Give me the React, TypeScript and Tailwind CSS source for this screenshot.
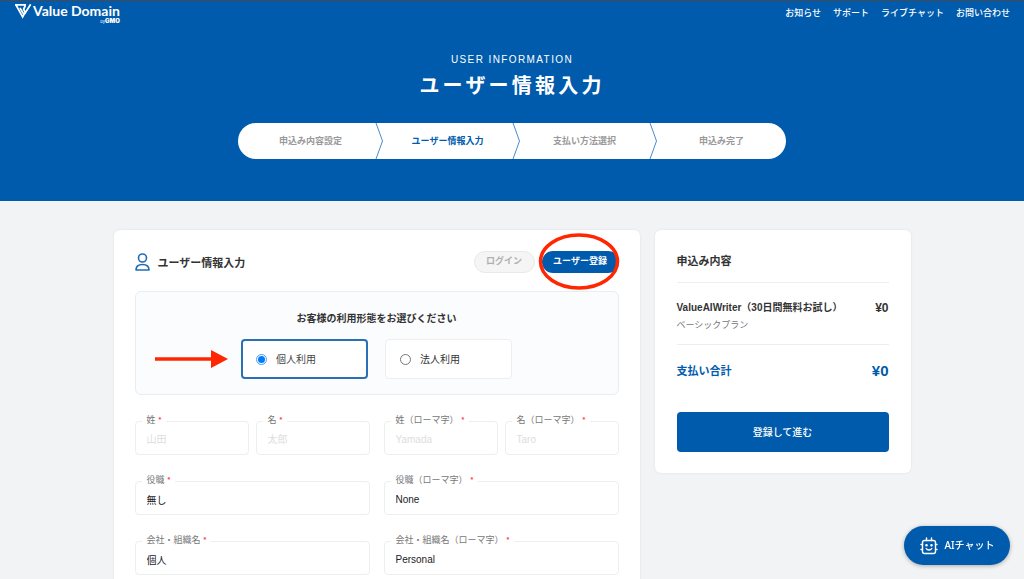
import { useId, useState } from 'react';

const NAV = ['お知らせ', 'サポート', 'ライブチャット', 'お問い合わせ'];
const STEPS = ['申込み内容設定', 'ユーザー情報入力', '支払い方法選択', '申込み完了'];
const CURRENT_STEP = 1;

function Logo() {
  return (
    <a href="#" className="flex items-start text-white" aria-label="Value Domain by GMO">
      <svg viewBox="0 0 51 45" className="mt-[3px] mr-px ml-px h-[15px] w-[17px]" fill="none" stroke="currentColor" strokeWidth="5">
        <path d="M0 2.500h33M3 3l20 36 7-13M15 12l12 20" />
        <path d="M31 4l-5 12 5 10L47 1" strokeWidth="5.500" />
      </svg>
      <span className="flex flex-col items-end">
        <span className="mt-[2px] font-[Lato,sans-serif] text-[14px] leading-[16px] font-bold">Value Domain</span>
        <span className="-mt-px font-[Inter,sans-serif] text-[6px] leading-[5px] font-black">
          <span className="text-[4px] font-normal">by</span>GMO
        </span>
      </span>
    </a>
  );
}

function Stepper() {
  return (
    <ol className="mx-auto mt-[22px] flex h-9 w-full max-w-[548px] overflow-hidden rounded-full bg-white">
      {STEPS.map((step, i) => (
        <li key={step} className="flex flex-1 items-center">
          <svg viewBox="0 0 8 36" className="h-9 w-2 shrink-0" fill="none" stroke="#4b8bc8" strokeWidth="1">
            {i > 0 && <path d="M1 0l6.500 18L1 36" />}
          </svg>
          <span
            className={
              i === CURRENT_STEP
                ? 'flex-1 pt-[2px] text-center text-[9px] font-bold text-[#005bac]'
                : 'flex-1 pt-[2px] text-center text-[9px] font-bold text-[#999999]'
            }
          >
            {step}
          </span>
        </li>
      ))}
    </ol>
  );
}

function Field({ label, value, placeholder }: { label: string; value?: string; placeholder?: string }) {
  const id = useId();
  return (
    <div className="relative">
      <label
        htmlFor={id}
        className="absolute -top-[7px] left-[7px] flex items-center bg-white px-[5px] text-[9px] leading-[12px] whitespace-nowrap text-[#777777]"
      >
        {label}
        <span className="ml-[3px] text-[7px] font-bold text-[#ff3b3b]">*</span>
      </label>
      <input
        id={id}
        type="text"
        defaultValue={value}
        placeholder={placeholder}
        className="block h-[34px] w-full rounded border border-[#eceeef] bg-white px-[11px] pt-[2px] text-[10px] text-[#222222] outline-none placeholder:text-[#dddddd]"
      />
    </div>
  );
}

function UsageChoice({ label, checked, onSelect }: { label: string; checked: boolean; onSelect: () => void }) {
  return (
    <label
      className={
        checked
          ? 'flex h-10 w-[127px] items-center gap-[9px] rounded border-2 border-[#2a70b5] bg-white px-[13px] text-[10px] text-[#444444]'
          : 'flex h-10 w-[127px] items-center gap-[9px] rounded border border-[#eceeef] bg-white px-[14px] text-[10px] text-[#333333]'
      }
    >
      <input
        type="radio"
        name="usage"
        checked={checked}
        onChange={onSelect}
        className="size-[11px] appearance-none rounded-full border border-[#777777] bg-white bg-clip-content p-px checked:border-[#4a9bff] checked:bg-[#007aff]"
      />
      {label}
    </label>
  );
}

function UserForm() {
  const [usage, setUsage] = useState('個人利用');
  return (
    <section className="min-w-0 flex-1 rounded-md bg-white px-[21px] pt-[21px] pb-12 shadow-[0_0_3px_rgba(0,40,60,0.08)]">
      <div className="flex h-[22px] items-center">
        <svg viewBox="0 0 15 18" className="mr-2 h-[18px] w-[15px]" fill="none" stroke="#1f6cb5" strokeWidth="1.6">
          <circle cx="7.500" cy="5" r="4" />
          <path d="M1 17c0-3.600 2.400-5.500 6.500-5.500S14 13.400 14 17z" strokeLinejoin="round" />
        </svg>
        <h2 className="flex-1 pt-[2px] text-[11px] font-bold text-[#333333]">ユーザー情報入力</h2>
        <button
          type="button"
          className="h-[22px] w-[61px] rounded-full border border-[#e9e9e9] bg-[#f5f5f5] text-[9px] font-bold text-[#b0b0b0]"
        >
          ログイン
        </button>
        <div className="relative ml-[7px]">
          <button type="button" className="block h-[22px] w-[77px] rounded-full bg-[#005bac] text-[9px] font-bold text-white">
            ユーザー登録
          </button>
          <svg
            viewBox="0 0 82 58"
            className="pointer-events-none absolute -top-[18px] -left-1 h-[58px] w-[82px] max-w-none"
            fill="none"
            stroke="#ff2600"
            strokeWidth="3.500"
          >
            <ellipse cx="41" cy="28.500" rx="38.500" ry="26.500" />
          </svg>
        </div>
      </div>

      <fieldset className="relative mt-[18px] h-[104px] rounded-md border border-[#e9edf0] bg-[#fbfcfe] pt-5">
        <p className="text-center text-[10px] leading-[14px] font-bold text-[#333333]">お客様の利用形態をお選びください</p>
        <div className="mt-[13px] flex justify-center gap-[17px]">
          {['個人利用', '法人利用'].map((name) => (
            <UsageChoice key={name} label={name} checked={usage === name} onSelect={() => setUsage(name)} />
          ))}
        </div>
        <svg viewBox="0 0 73 18" className="absolute top-[58px] left-[19px] h-[18px] w-[73px]" fill="#ff2600">
          <path d="M0 7.300h56V0l17 9-17 9v-7.300H0z" />
        </svg>
      </fieldset>

      <div className="mt-[26px] grid grid-cols-2 gap-x-[14px] gap-y-[26px]">
        <div className="grid grid-cols-2 gap-[7px]">
          <Field label="姓" placeholder="山田" />
          <Field label="名" placeholder="太郎" />
        </div>
        <div className="grid grid-cols-2 gap-[7px]">
          <Field label="姓（ローマ字）" placeholder="Yamada" />
          <Field label="名（ローマ字）" placeholder="Taro" />
        </div>
        <Field label="役職" value="無し" />
        <Field label="役職（ローマ字）" value="None" />
        <Field label="会社・組織名" value="個人" />
        <Field label="会社・組織名（ローマ字）" value="Personal" />
      </div>
    </section>
  );
}

function OrderSummary() {
  return (
    <aside className="w-64 shrink-0 rounded-md bg-white px-[22px] pt-[22px] pb-[21px] shadow-[0_0_3px_rgba(0,40,60,0.08)]">
      <h2 className="text-[11px] leading-[18px] font-bold text-[#333333]">申込み内容</h2>
      <div className="mt-3 border-y border-[#eeeeee] pt-[18px] pb-[13px]">
        <div className="flex justify-between text-[10px] leading-[14px] font-bold text-[#333333]">
          <span>ValueAIWriter（30日間無料お試し）</span>
          <span className="text-[12px]">¥0</span>
        </div>
        <p className="mt-1 text-[9px] leading-[12px] text-[#777777]">ベーシックプラン</p>
      </div>
      <div className="mt-[17px] flex items-center justify-between leading-[18px] font-bold text-[#005bac]">
        <span className="text-[11px]">支払い合計</span>
        <span className="text-[15px]">¥0</span>
      </div>
      <button type="button" className="mt-8 block h-10 w-full rounded bg-[#005bac] text-[10px] font-medium text-white">
        登録して進む
      </button>
    </aside>
  );
}

function ChatButton() {
  return (
    <button
      type="button"
      className="fixed right-[14px] bottom-[14px] flex h-[39px] w-[106px] items-center justify-center gap-[7px] rounded-full bg-[#005bac] font-['Noto_Sans','Noto_Sans_CJK_JP',sans-serif] text-[10px] font-medium text-white shadow-[0_1px_4px_rgba(0,0,0,0.3)]"
    >
      <svg viewBox="0 0 18 18" className="size-[18px]" fill="none" stroke="currentColor" strokeWidth="1.400" strokeLinecap="round">
        <rect x="2.500" y="3.500" width="13" height="13" rx="2" />
        <path d="M6.500 3.500V1M11.500 3.500V1M2.500 7.500H1M2.500 12.500H1M15.500 7.500H17M15.500 12.500H17M6.200 11.500c1.200 2 4.400 2 5.600 0" />
        <circle cx="6.500" cy="8.300" r=".6" fill="currentColor" />
        <circle cx="11.500" cy="8.300" r=".6" fill="currentColor" />
      </svg>
      AIチャット
    </button>
  );
}

export default function App() {
  return (
    <div className="min-h-screen bg-[#f1f3f5] font-['Liberation_Sans','Noto_Sans_CJK_JP',sans-serif]">
      <header className="border-t border-[#444b54] bg-[#005bac] pb-[42px] text-white">
        <div className="flex h-6 items-start justify-between px-[14px]">
          <Logo />
          <nav className="flex h-6 items-center gap-3 pt-px text-[9px] font-medium">
            {NAV.map((item) => (
              <a key={item} href="#">
                {item}
              </a>
            ))}
          </nav>
        </div>
        <p className="mt-[29px] text-center text-[10px] leading-[12px] tracking-[0.14em]">USER INFORMATION</p>
        <h1 className="mt-[6px] text-center text-[20px] leading-[29px] font-bold tracking-[0.16em]">ユーザー情報入力</h1>
        <Stepper />
      </header>
      <main className="mx-auto flex max-w-[797px] items-start gap-[15px] pt-[29px]">
        <UserForm />
        <OrderSummary />
      </main>
      <ChatButton />
    </div>
  );
}
